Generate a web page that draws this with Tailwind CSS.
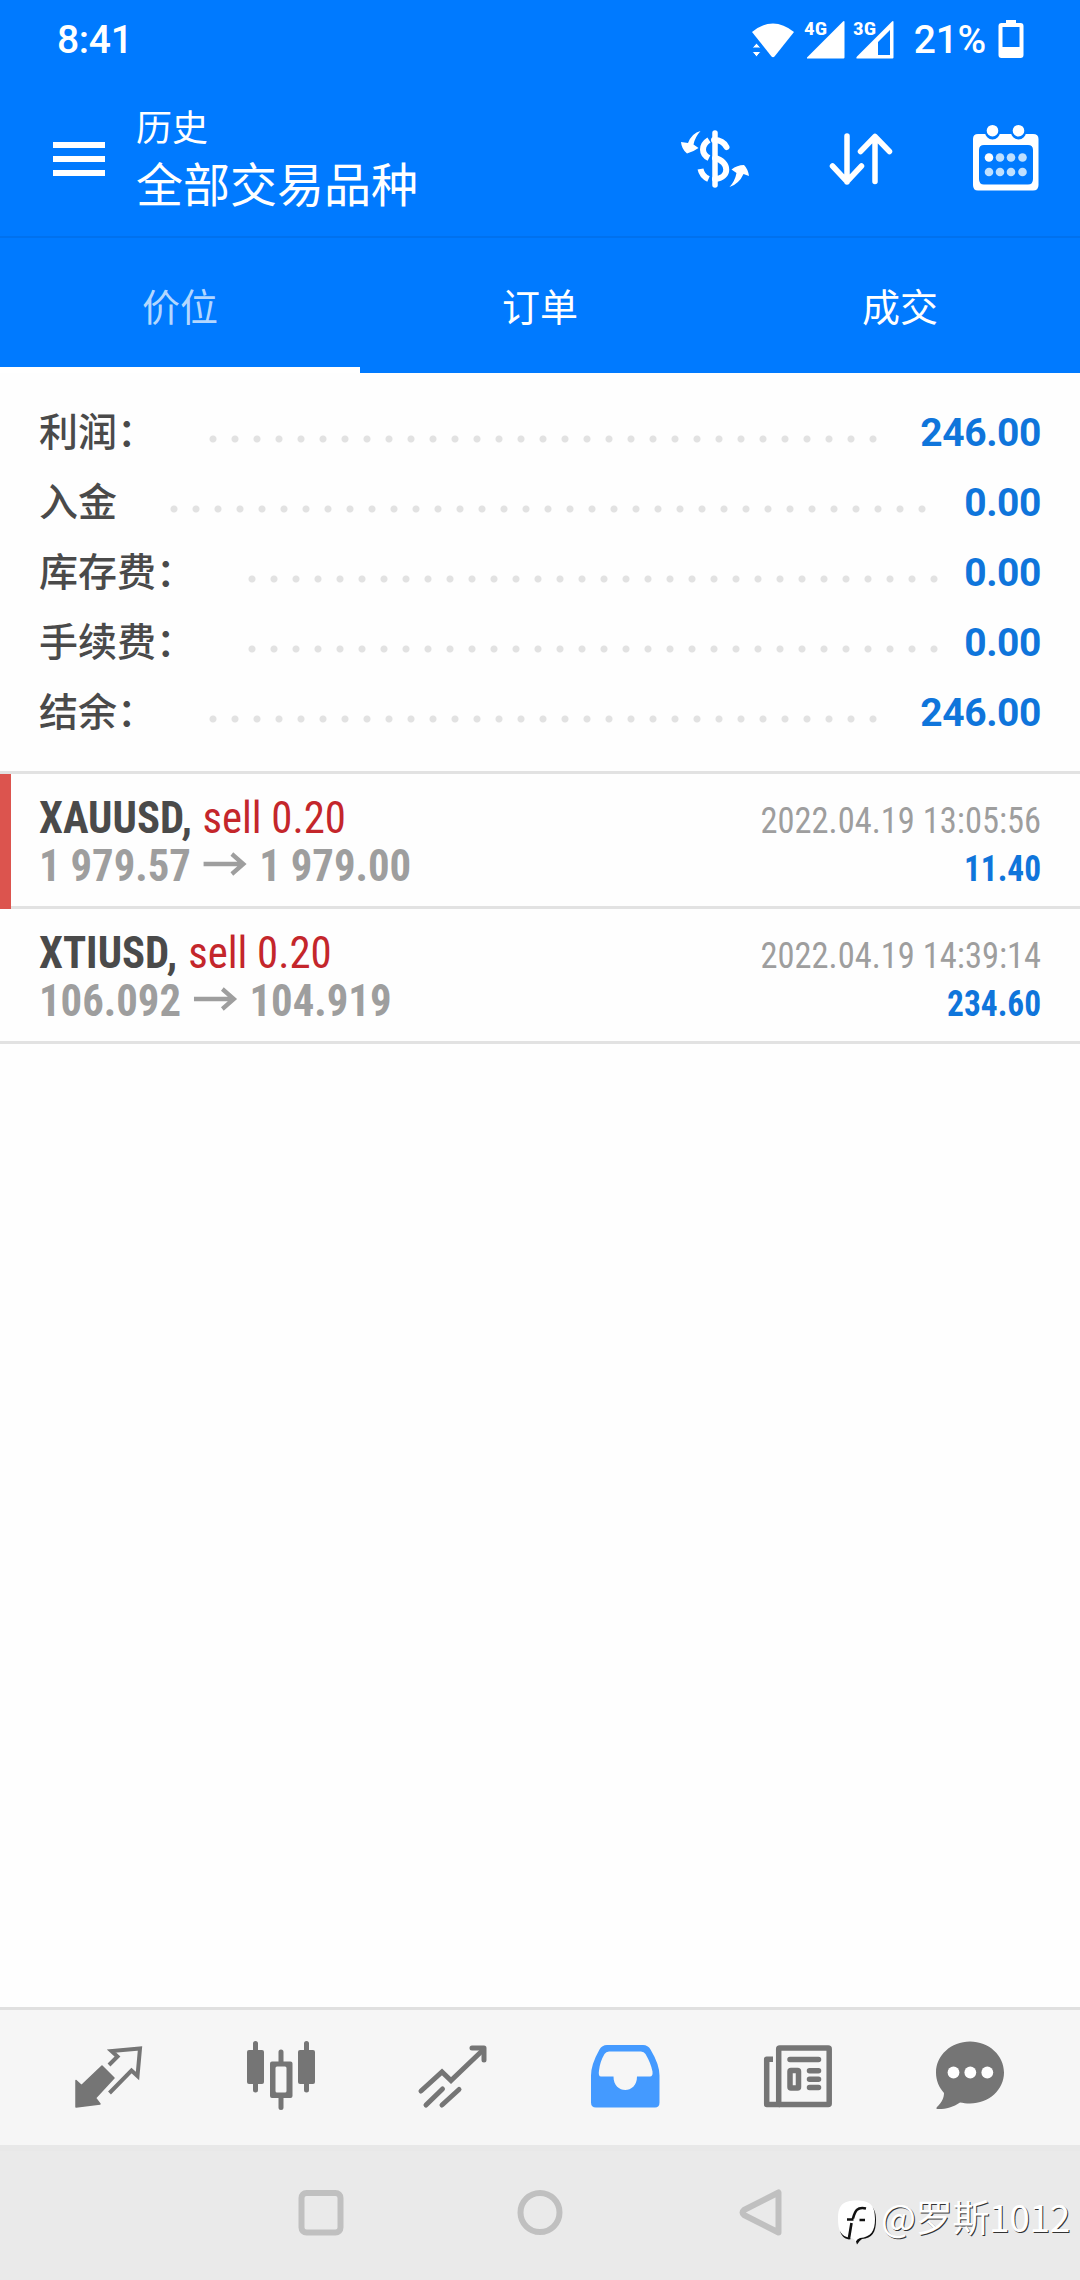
<!DOCTYPE html>
<html lang="zh-CN">
<head>
<meta charset="utf-8">
<title>历史</title>
<script src="https://cdn.jsdelivr.net/npm/@tailwindcss/browser@4"></script>
</head>
<body class="flex h-[2280px] w-[1080px] flex-col overflow-hidden bg-[#fefefe] font-['Roboto','Noto_Sans_CJK_SC',sans-serif]">

<header class="flex h-[373px] shrink-0 flex-col bg-[#007aff] text-white">
  <!-- status bar -->
  <div class="flex h-[78px] items-center justify-between pr-[56px] pl-[57px]">
    <span class="pt-[2px] text-[39px] leading-none font-medium tracking-[-0.3px]">8:41</span>
    <div class="flex items-center">
      <svg class="h-[46px] w-[160px]" viewBox="745 16 160 46" fill="#fff">
        <path d="M752 32Q773 15 794 32L774.500 56.500Q773 58 771.500 56.500Z"/>
        <path d="M752 48L756.500 43L761 48ZM752 51.500H761L756.500 57Z" stroke="#007aff" stroke-width="1"/>
        <text x="804" y="35" class="font-['Roboto_Condensed']" font-size="19" font-weight="700" textLength="23" lengthAdjust="spacingAndGlyphs">4G</text>
        <path d="M807 58.500Q806.500 57.500 808 56.500L843 21.500Q844.500 20.500 844.500 22V57.500Q844.500 58.500 843.500 58.500Z"/>
        <text x="853" y="35" class="font-['Roboto_Condensed']" font-size="19" font-weight="700" textLength="23" lengthAdjust="spacingAndGlyphs">3G</text>
        <path fill-rule="evenodd" d="M856.500 58.500Q856 57.500 857 56.500L892 21.500Q893.500 20.500 893.500 22V57.500Q893.500 58.500 892.500 58.500ZM878 42V55H890V30Z"/>
      </svg>
      <span class="ml-[9px] pt-[2px] text-[39px] leading-none font-medium tracking-[-0.3px]">21%</span>
      <svg class="ml-3 h-[40px] w-[26px]" viewBox="997.500 20 26 40"><path fill="#fff" fill-rule="evenodd" d="M1005.500 24V21H1015.500V24H1020Q1023 24 1023 27V56Q1023 59 1020 59H1001Q998 59 998 56V27Q998 24 1001 24ZM1002 28V48H1019V28Z"/></svg>
    </div>
  </div>

  <!-- toolbar -->
  <div class="flex h-[160px] items-start border-b-2 border-[#0071ee] pr-[36px] pl-[53px]">
    <div class="mt-[64px] flex w-[52px] flex-col gap-2">
      <i class="h-[6px] bg-white"></i><i class="h-[6px] bg-white"></i><i class="h-[6px] bg-white"></i>
    </div>
    <div class="mt-[25px] ml-[31px] flex-1 font-['Noto_Sans_CJK_SC',sans-serif]">
      <p class="text-[36px] leading-[44px]">历史</p>
      <h1 class="mt-[7px] text-[47px] leading-[56px] font-normal">全部交易品种</h1>
    </div>
    <div class="mt-[42px] flex items-center gap-[60px]">
      <svg class="mr-[9px] h-[80px] w-[90px]" viewBox="670 120 90 80" fill="none" stroke="#fff" stroke-width="5.500" stroke-linecap="round">
        <path d="M715 133V185"/>
        <path d="M726.500 147C724 142 719 140 714 140" stroke-width="6"/>
        <path d="M709 140C701 145 701 154 709 158" stroke-width="6" stroke-linecap="butt"/>
        <path d="M715 158C730 162 730 178 715 179" stroke-width="6"/>
        <path d="M700.500 169C701.500 174 704 177 708.500 179" stroke-width="6" stroke-linecap="butt"/>
        <path d="M700.500 131Q692 133 688 143L681 142Q681.500 149 687 153.500Q693 152 698.500 148L693.500 144.500Q695 137 700.500 131Z" fill="#fff" stroke="none"/>
        <path d="M729.500 187Q739 184 743.500 174L749 176Q748 169 744 165Q737 165 731.500 169.500L736.500 173Q735 181 729.500 187Z" fill="#fff" stroke="none"/>
      </svg>
      <svg class="-ml-[6px] h-[80px] w-[76px]" viewBox="823 120 76 80" fill="none" stroke="#fff" stroke-width="5.500" stroke-linecap="round" stroke-linejoin="round"><path d="M847 136V182M832.500 166L847 181.500L861.500 166M875 181.500V136.500M860.500 151.500L875 136.500L889.500 151.500"/></svg>
      <svg class="-ml-[3px] h-[80px] w-[88px]" viewBox="956 120 88 80">
        <path fill="#fff" fill-rule="evenodd" d="M978 134H1033Q1038.500 134 1038.500 139V185Q1038.500 190.500 1033 190.500H978Q973 190.500 973 185V139Q973 134 978 134ZM984 145Q979 145 979 150V179Q979 184.500 984 184.500H1028Q1033 184.500 1033 179V150Q1033 145 1028 145Z"/>
        <path d="M992.500 130V132M1018.500 130V132" stroke="#007aff" stroke-width="15" stroke-linecap="round"/>
        <g fill="#fff"><circle cx="992.500" cy="130.700" r="5.800"/><circle cx="1018.500" cy="130.700" r="5.800"/><circle cx="989" cy="157.500" r="4.300"/></g>
        <g fill="#bfe0ff"><circle cx="1000" cy="157.500" r="4.300"/><circle cx="1011" cy="157.500" r="4.300"/><circle cx="1022.500" cy="157.500" r="4.300"/><circle cx="989" cy="172" r="4.300"/><circle cx="1000" cy="172" r="4.300"/><circle cx="1011" cy="172" r="4.300"/><circle cx="1022.500" cy="172" r="4.300"/></g>
      </svg>
    </div>
  </div>

  <!-- tabs -->
  <nav class="grid flex-1 grid-cols-3 text-center font-['Noto_Sans_CJK_SC',sans-serif] text-[38px]">
    <a class="border-b-[6px] border-white pt-[39px] leading-[56px] text-[#b3d7ff]">价位</a>
    <a class="pt-[39px] leading-[56px]">订单</a>
    <a class="pt-[39px] leading-[56px]">成交</a>
  </nav>
</header>

<main class="flex-1">
  <!-- account totals -->
  <dl class="h-[401px] border-b-[3px] border-[#e2e2e2] pt-[21px] pr-[39px] pl-[39px] font-bold text-[#0f75db]">
    <div class="flex h-[70px] items-center">
      <dt class="font-['Noto_Sans_CJK_SC',sans-serif] text-[39px] leading-[70px] font-medium text-[#4a4a4a]">利润：</dt>
      <i class="mt-[19px] ml-[46px] h-2 w-[682px] bg-[radial-gradient(circle,#e2e2e2_3px,transparent_4px)] bg-[length:22px_8px]"></i>
      <dd class="ml-auto pt-[8px] text-[39px] tracking-[-0.4px]">246.00</dd>
    </div>
    <div class="flex h-[70px] items-center">
      <dt class="font-['Noto_Sans_CJK_SC',sans-serif] text-[39px] leading-[70px] font-medium text-[#4a4a4a]">入金</dt>
      <i class="mt-[19px] ml-[46px] h-2 w-[770px] bg-[radial-gradient(circle,#e2e2e2_3px,transparent_4px)] bg-[length:22px_8px]"></i>
      <dd class="ml-auto pt-[8px] text-[39px] tracking-[-0.4px]">0.00</dd>
    </div>
    <div class="flex h-[70px] items-center">
      <dt class="font-['Noto_Sans_CJK_SC',sans-serif] text-[39px] leading-[70px] font-medium text-[#4a4a4a]">库存费：</dt>
      <i class="mt-[19px] ml-[46px] h-2 w-[704px] bg-[radial-gradient(circle,#e2e2e2_3px,transparent_4px)] bg-[length:22px_8px]"></i>
      <dd class="ml-auto pt-[8px] text-[39px] tracking-[-0.4px]">0.00</dd>
    </div>
    <div class="flex h-[70px] items-center">
      <dt class="font-['Noto_Sans_CJK_SC',sans-serif] text-[39px] leading-[70px] font-medium text-[#4a4a4a]">手续费：</dt>
      <i class="mt-[19px] ml-[46px] h-2 w-[704px] bg-[radial-gradient(circle,#e2e2e2_3px,transparent_4px)] bg-[length:22px_8px]"></i>
      <dd class="ml-auto pt-[8px] text-[39px] tracking-[-0.4px]">0.00</dd>
    </div>
    <div class="flex h-[70px] items-center">
      <dt class="font-['Noto_Sans_CJK_SC',sans-serif] text-[39px] leading-[70px] font-medium text-[#4a4a4a]">结余：</dt>
      <i class="mt-[19px] ml-[46px] h-2 w-[682px] bg-[radial-gradient(circle,#e2e2e2_3px,transparent_4px)] bg-[length:22px_8px]"></i>
      <dd class="ml-auto pt-[8px] text-[39px] tracking-[-0.4px]">246.00</dd>
    </div>
  </dl>

  <!-- closed positions -->
  <section class="font-['Roboto_Condensed','Roboto',sans-serif]">
    <div class="flex h-[135px]">
      <i class="w-[11px] bg-[#dc544e]"></i>
      <div class="flex flex-1 justify-between border-b-[3px] border-[#e2e2e2] pr-[39px] pl-[28px]">
        <div class="origin-left scale-x-95 pt-[20px] text-[45px] leading-[48px]">
          <p class="flex"><b class="w-[172px] text-[#4a4a4a]">XAUUSD,</b><span class="text-[#c4262b]">sell 0.20</span></p>
          <p class="flex font-bold text-[#9e9e9e]"><span>1 979.57</span>
            <svg class="mx-[13px] mt-[10px] h-6 w-[46px]" viewBox="0 0 46 24" fill="none" stroke="#9e9e9e" stroke-width="4.500"><path d="M0 12H43M30 2L42 12L30 22"/></svg>
            <span>1 979.00</span></p>
        </div>
        <div class="pt-[22px] text-right text-[37.500px] leading-[48px]">
          <p class="origin-right scale-x-[.92] text-[#9e9e9e]">2022.04.19 13:05:56</p>
          <p class="origin-right scale-x-[.89] font-bold text-[#0f75db]">11.40</p>
        </div>
      </div>
    </div>
    <div class="flex h-[135px] justify-between border-b-[3px] border-[#e2e2e2] px-[39px]">
      <div class="origin-left scale-x-95 pt-[20px] text-[45px] leading-[48px]">
        <p class="flex"><b class="w-[157px] text-[#4a4a4a]">XTIUSD,</b><span class="text-[#c4262b]">sell 0.20</span></p>
        <p class="flex font-bold text-[#9e9e9e]"><span>106.092</span>
          <svg class="mx-[13px] mt-[10px] h-6 w-[46px]" viewBox="0 0 46 24" fill="none" stroke="#9e9e9e" stroke-width="4.500"><path d="M0 12H43M30 2L42 12L30 22"/></svg>
          <span>104.919</span></p>
      </div>
      <div class="pt-[22px] text-right text-[37.500px] leading-[48px]">
        <p class="origin-right scale-x-[.92] text-[#9e9e9e]">2022.04.19 14:39:14</p>
        <p class="origin-right scale-x-[.89] font-bold text-[#0f75db]">234.60</p>
      </div>
    </div>
  </section>
</main>

<!-- app navigation -->
<nav class="grid h-[138px] shrink-0 grid-cols-6 items-center justify-items-center border-t-[3px] border-[#e0e0e0] bg-[#f6f6f6] pr-[24px] pl-[23px]">
  <svg class="h-[80px] w-[80px]" viewBox="69 2037.500 80 80"><path fill="#757575" stroke="#757575" stroke-linejoin="round" stroke-width="1.500" d="M76 2106.500V2080L81.500 2085L102 2065.500L114 2077.500L95.500 2097.500L100 2103.500Z"/><path fill="none" stroke="#757575" stroke-width="4" d="M109 2064.500L117.500 2056L111.500 2050.500L140 2048L137.500 2075.500L131.500 2070L109.500 2092.500"/></svg>
  <svg class="h-[80px] w-[80px]" viewBox="241 2038.500 80 80" fill="#757575"><rect x="247" y="2050.500" width="17" height="34" rx="2"/><rect x="298" y="2050.500" width="17" height="34" rx="2"/><path d="M255.500 2044V2090.500M306.500 2044V2090.500M281 2052.500V2062M281 2098V2108" stroke="#757575" stroke-width="5" stroke-linecap="round"/><path fill-rule="evenodd" d="M272 2062H290.500Q292.500 2062 292.500 2064V2096.500Q292.500 2098.500 290.500 2098.500H272Q270 2098.500 270 2096.500V2064Q270 2062 272 2062ZM277 2067Q275.500 2067 275.500 2068.500V2091.500Q275.500 2093 277 2093H285Q286.500 2093 286.500 2091.500V2068.500Q286.500 2067 285 2067Z"/></svg>
  <svg class="h-[80px] w-[80px]" viewBox="413.500 2037.500 80 80" fill="none" stroke="#757575" stroke-width="5" stroke-linecap="round" stroke-linejoin="round"><path stroke-linejoin="miter" d="M421.500 2090.500L442.500 2071.500L451.500 2080L484 2049"/><path d="M472.500 2047.500H484.500V2059.500M426.500 2104.500L443 2088.500M442.500 2104.500L459.500 2089"/></svg>
  <svg class="h-[80px] w-[80px]" viewBox="586 2037.500 80 80"><path fill="#449aff" fill-rule="evenodd" d="M607 2044.500H643Q648 2044.500 650.500 2049Q659.500 2064 659.500 2075V2102Q659.500 2107 655 2107H596Q591 2107 591 2102V2075Q591 2064 599.500 2049Q602 2044.500 607 2044.500ZM609 2051Q606 2051 604.500 2053.500Q600 2061 599 2070Q598 2076 601 2076H613.500C613.500 2094 637 2094 637 2076H650Q653 2076 652.500 2071Q651 2063 645.500 2053.500Q644 2051 641 2051Z"/></svg>
  <svg class="h-[80px] w-[80px]" viewBox="758 2037.500 80 80" fill="none" stroke="#757575" stroke-width="5.500"><rect x="778.700" y="2047.500" width="50.500" height="56.500" rx="1"/><path stroke-linejoin="round" d="M773 2058.700H766.700V2104H780"/><path d="M790 2059H818.500M809.500 2070.300H818.500M809.500 2078.700H818.500M809.500 2087H818.500" stroke-linecap="round"/><rect x="790" y="2070" width="8.500" height="17.500" rx="1"/></svg>
  <svg class="h-[80px] w-[80px]" viewBox="930 2037.500 80 80"><path fill="#757575" d="M970 2041C989 2041 1004 2055 1004 2072C1004 2089 989 2103 970 2103C966 2103 963 2102.500 960 2102C953 2107 944 2109 937 2108.500Q935.500 2108 937 2106.500C942 2102 944 2097 944 2092.500C939 2087 936 2080 936 2072C936 2055 951 2041 970 2041Z"/><g fill="#fff"><circle cx="953.500" cy="2072" r="5.900"/><circle cx="970.300" cy="2072" r="5.900"/><circle cx="987.300" cy="2072" r="5.900"/></g></svg>
</nav>

<!-- system navigation -->
<footer class="relative h-[135px] shrink-0 border-t-[6px] border-[#e8e8e8] bg-[#eaeaea]">
  <div class="flex h-[124px] items-center pl-[296px]">
    <svg class="h-[52px] w-[52px]" viewBox="0 0 52 52" fill="none" stroke="#c0c0c0" stroke-width="6"><rect x="5.500" y="6" width="39" height="39.500" rx="5"/></svg>
    <svg class="ml-[166px] h-[52px] w-[52px]" viewBox="0 0 52 52" fill="none" stroke="#c0c0c0" stroke-width="6"><circle cx="26" cy="25.500" r="19.500"/></svg>
    <svg class="ml-[169px] h-[52px] w-[52px]" viewBox="0 0 52 52" fill="none" stroke="#c0c0c0" stroke-width="6" stroke-linejoin="round"><path d="M9 23L43.500 5.500V45.500L9 28Q6 25.500 9 23Z"/></svg>
  </div>
  <!-- signature -->
  <div class="absolute top-[38px] left-[836px] flex items-start text-white">
    <svg class="mt-[9px] h-[48px] w-[42px]" viewBox="836 2198 42 48">
      <path fill="#111" d="M868 2204C874 2207 876 2212 876 2220C876 2233 872 2238 862 2239Q859 2241 857 2244.500L855.500 2240L858 2236ZM842 2232L851 2239L849 2239.500C844 2238.500 841.500 2236 840 2231Z"/>
      <path fill="#fff" d="M856.500 2200.500C870 2200.500 875 2205 875 2219C875 2231 871 2237 860 2238Q857 2239 855.500 2242Q854.500 2238 850 2238C841 2236 838 2231 838 2219C838 2205 843 2200.500 856.500 2200.500Z"/>
      <path fill="none" stroke="#111" stroke-width="2.600" d="M866 2208.500C857 2206.500 855 2211 853 2218.500M851.500 2223L849 2238M847 2219.500H853.500M859.500 2220H865"/>
    </svg>
    <span class="ml-[3px] pt-[3px] font-['Noto_Sans_CJK_SC',sans-serif] text-[37px] leading-[48px] font-normal tracking-[-0.3px] [text-shadow:1px_1px_0_#333]">@罗斯1012</span>
  </div>
</footer>
</body>
</html>
